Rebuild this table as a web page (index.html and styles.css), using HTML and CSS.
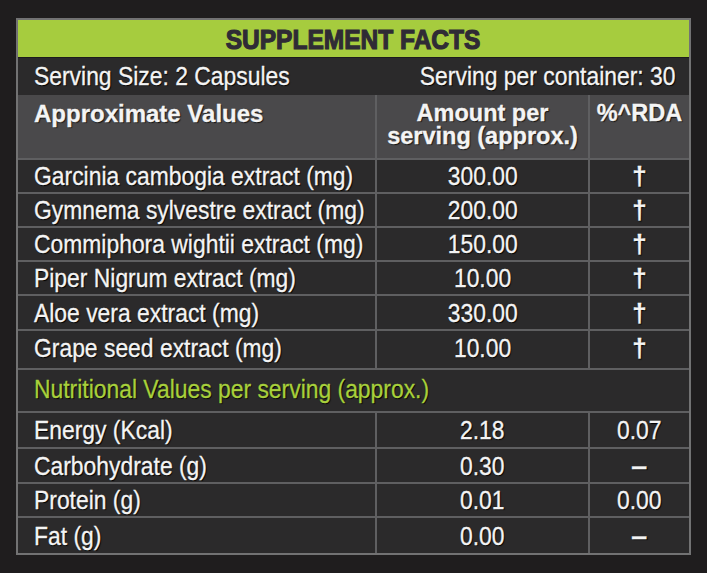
FILE: index.html
```html
<!DOCTYPE html>
<html lang="en">
<head>
<meta charset="utf-8">
<title>Supplement Facts</title>
<link rel="stylesheet" href="styles.css">
</head>
<body>
<div class="facts">
  <div class="title"><span class="tt">SUPPLEMENT FACTS</span></div>
  <div class="serving">
    <span class="t tl">Serving Size: 2 Capsules</span>
    <span class="t tr">Serving per container: 30</span>
  </div>
  <div class="grid">
    <div class="cell head left">Approximate Values</div>
    <div class="cell head center"><div class="hl">Amount per</div><div class="hl">serving (approx.)</div></div>
    <div class="cell head center">%^RDA</div>

    <div class="cell left"><span class="t tl">Garcinia cambogia extract (mg)</span></div>
    <div class="cell center"><span class="t">300.00</span></div>
    <div class="cell center"><span class="t dag">†</span></div>

    <div class="cell left"><span class="t tl">Gymnema sylvestre extract (mg)</span></div>
    <div class="cell center"><span class="t">200.00</span></div>
    <div class="cell center"><span class="t dag">†</span></div>

    <div class="cell left"><span class="t tl">Commiphora wightii extract (mg)</span></div>
    <div class="cell center"><span class="t">150.00</span></div>
    <div class="cell center"><span class="t dag">†</span></div>

    <div class="cell left"><span class="t tl">Piper Nigrum extract (mg)</span></div>
    <div class="cell center"><span class="t">10.00</span></div>
    <div class="cell center"><span class="t dag">†</span></div>

    <div class="cell left"><span class="t tl">Aloe vera extract (mg)</span></div>
    <div class="cell center"><span class="t">330.00</span></div>
    <div class="cell center"><span class="t dag">†</span></div>

    <div class="cell left tall"><span class="t tl">Grape seed extract (mg)</span></div>
    <div class="cell center tall"><span class="t">10.00</span></div>
    <div class="cell center tall"><span class="t dag">†</span></div>

    <div class="cell left section"><span class="t tl">Nutritional Values per serving (approx.)</span></div>

    <div class="cell left"><span class="t tl">Energy (Kcal)</span></div>
    <div class="cell center"><span class="t">2.18</span></div>
    <div class="cell center"><span class="t">0.07</span></div>

    <div class="cell left"><span class="t tl">Carbohydrate (g)</span></div>
    <div class="cell center"><span class="t">0.30</span></div>
    <div class="cell center"><span class="t dash">–</span></div>

    <div class="cell left"><span class="t tl">Protein (g)</span></div>
    <div class="cell center"><span class="t">0.01</span></div>
    <div class="cell center"><span class="t">0.00</span></div>

    <div class="cell left"><span class="t tl">Fat (g)</span></div>
    <div class="cell center"><span class="t">0.00</span></div>
    <div class="cell center"><span class="t dash">–</span></div>
  </div>
</div>
</body>
</html>
```

FILE: styles.css
```css
html, body {
  margin: 0;
  padding: 0;
  background: #1f1d1e;
}

body {
  padding: 18px 16px;
  font-family: "Liberation Sans", Arial, sans-serif;
  color: #f4f4f4;
}

.facts {
  width: 671px;
  border: 2px solid #727273;
  background: #2b2a2b;
}

.title {
  height: 37px;
  background: #a6cc3e;
  color: #2f2b35;
  display: flex;
  align-items: center;
  justify-content: center;
}

.tt {
  display: inline-block;
  font-weight: bold;
  font-size: 28.5px;
  line-height: 1;
  -webkit-text-stroke: 1.2px #2f2b35;
  transform: scaleX(0.86);
  transform-origin: center;
  padding-top: 2px;
}

.serving {
  height: 38px;
  display: flex;
  align-items: center;
  justify-content: space-between;
  padding: 0 13px 2px 16px;
  box-sizing: border-box;
  border-top: 1px solid #1c1b1c;
}

.t {
  display: inline-block;
  font-size: 26px;
  line-height: 28px;
  text-shadow: 1px 1px 1px #000;
  transform: scaleX(0.88);
  transform-origin: center;
  white-space: nowrap;
  -webkit-text-stroke: 0.3px #f4f4f4;
}

.tl {
  transform-origin: left center;
}

.tr {
  transform-origin: right center;
}

.grid {
  display: grid;
  grid-template-columns: 357px 211px 99px;
  grid-template-rows: 63px 32px 32px 32px 32px 33px 37px 41px 34px 33px 32px 35px;
  gap: 2px;
  background: #5f5f61;
}

.cell {
  background: #2b2a2b;
  display: flex;
  align-items: center;
  white-space: nowrap;
  overflow: hidden;
}

.left {
  padding-left: 16px;
}

.center {
  justify-content: center;
  text-align: center;
}

.head {
  background: #4a494b;
  align-items: flex-start;
  padding-top: 7px;
  font-weight: bold;
  font-size: 23.5px;
  line-height: 23px;
  text-shadow: 1px 1px 1px #111;
  -webkit-text-stroke: 0.3px #f4f4f4;
}

.head.left {
  font-size: 24px;
}

.head.center {
  flex-direction: column;
  align-items: center;
  justify-content: flex-start;
}

.hl {
  height: 23px;
  overflow: visible;
}

.tall {
  padding-bottom: 4px;
}

.section {
  grid-column: 1 / -1;
  padding-bottom: 3px;
}

.section .t {
  color: #a8d03c;
  -webkit-text-stroke: 0.3px #a8d03c;
}

.dag {
  font-weight: bold;
  transform: none;
}

.dash {
  font-weight: bold;
  transform: scaleX(1.1);
}
```
